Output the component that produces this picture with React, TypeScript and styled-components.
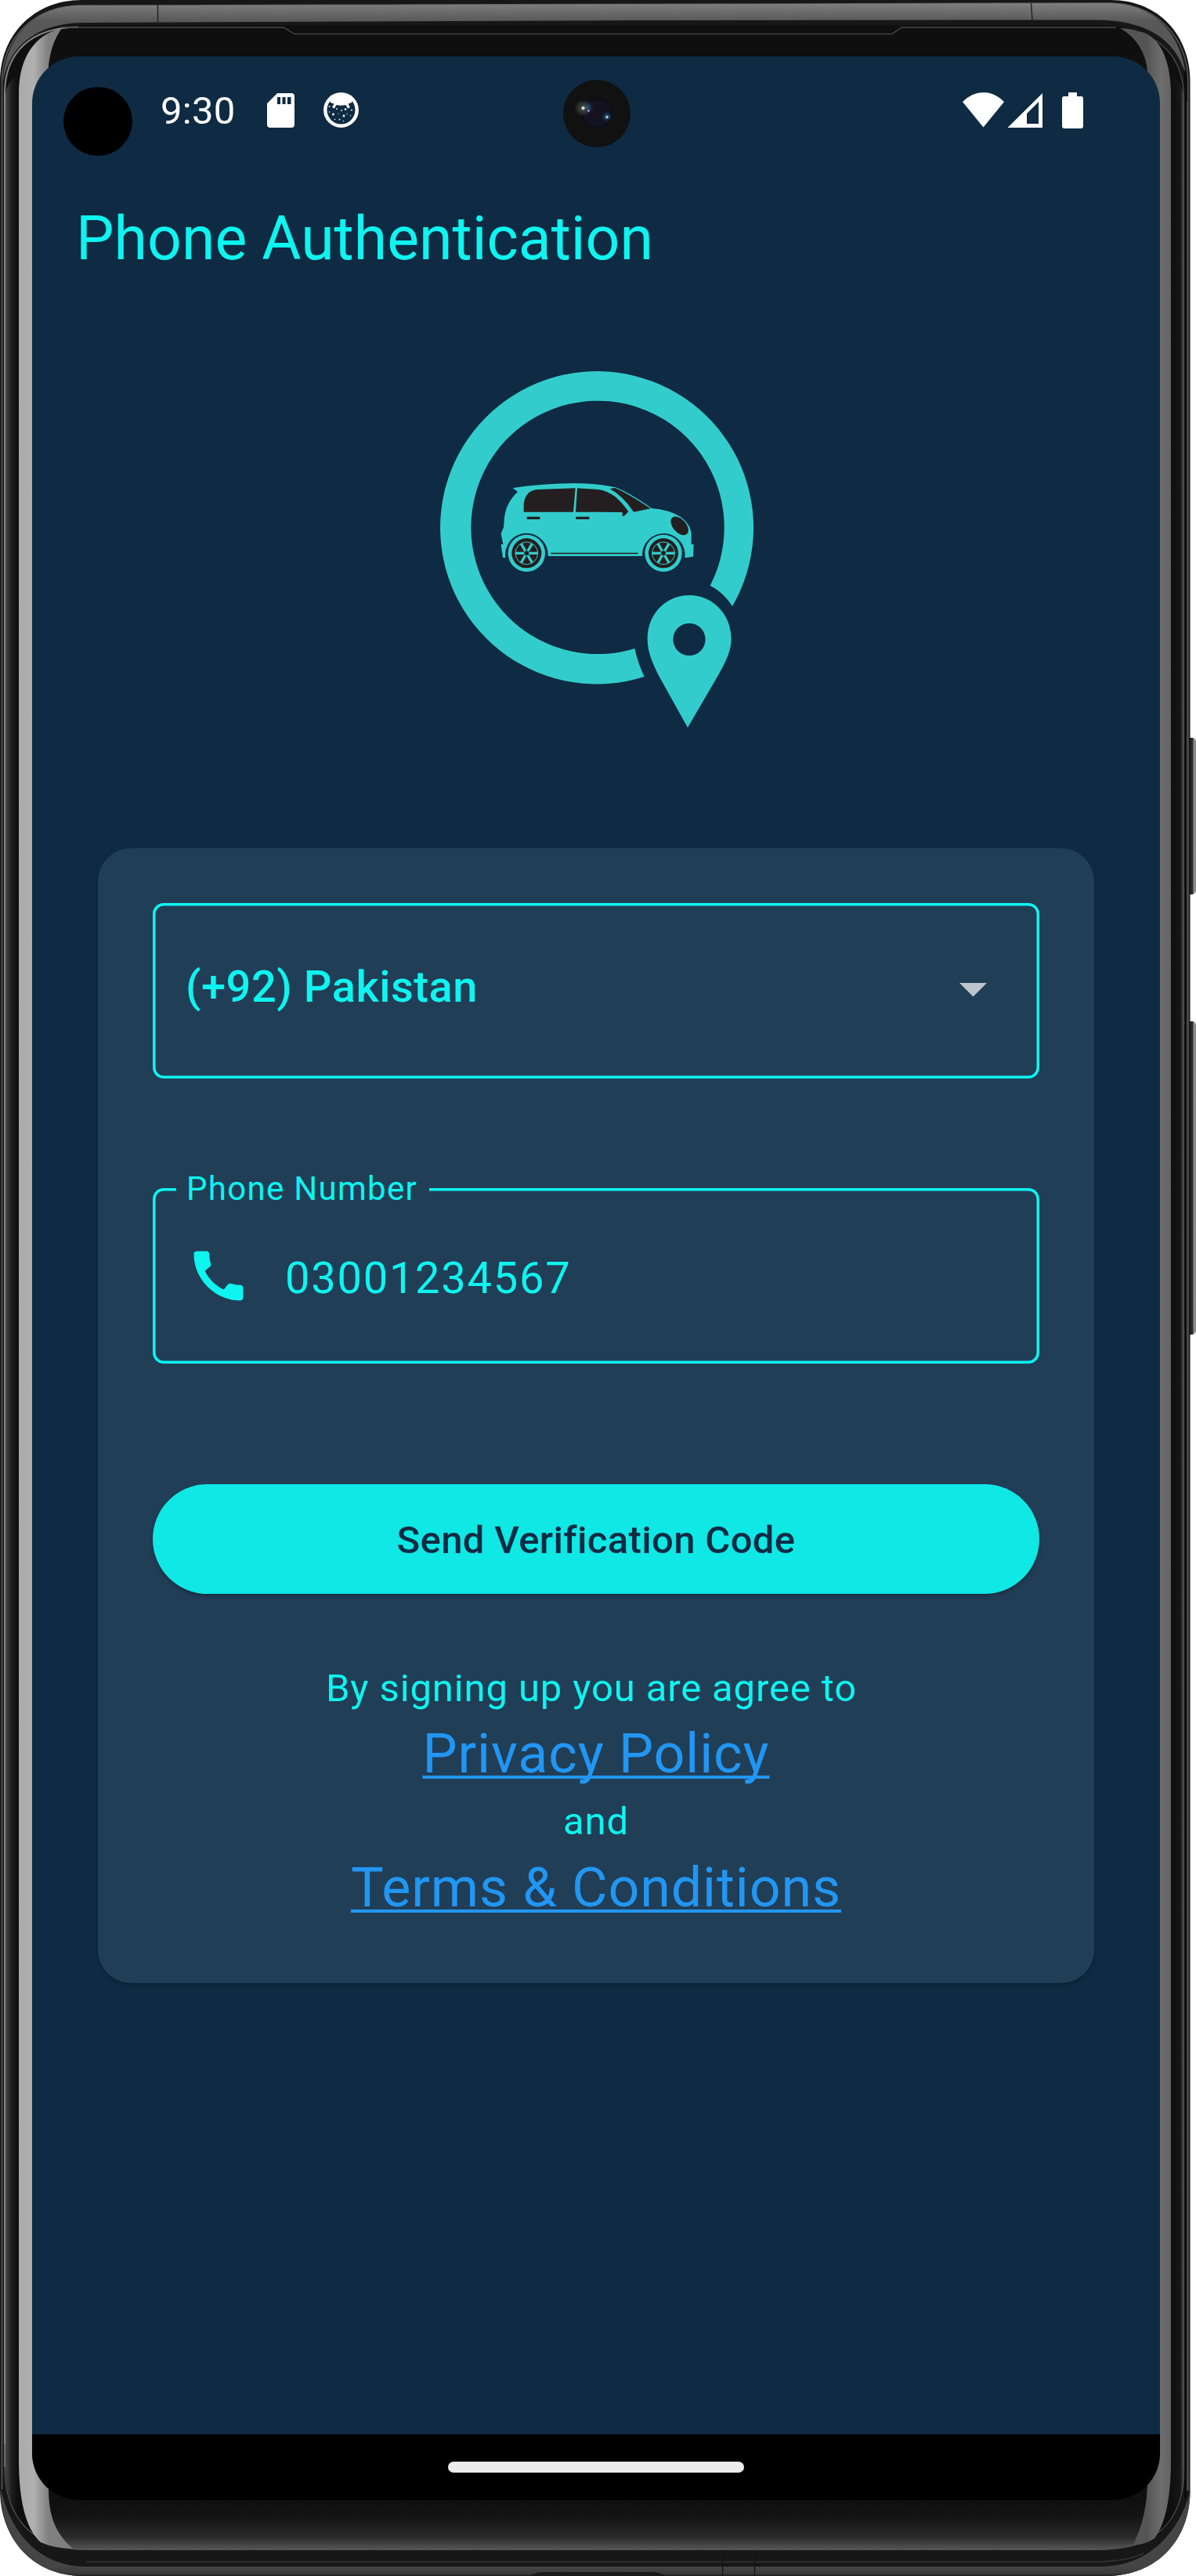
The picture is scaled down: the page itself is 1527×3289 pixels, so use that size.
import { useState } from 'react';
import styled, { createGlobalStyle, css } from 'styled-components';
import { MdCall } from 'react-icons/md';

const colors = {
  background: '#0e2b43',
  card: '#213e57',
  accent: '#0ef4f0',
  button: '#0fe8e5',
  link: '#2196f3',
  logo: '#33cccc',
  dark: '#231f20',
};

export default function App() {
  const [phone, setPhone] = useState('03001234567');

  return (
    <Device>
      <GlobalStyle />
      <DeviceFrame />
      <Screen>
        <StatusBar>
          <Clock>9:30</Clock>
          <SdCardIcon />
          <DebugIcon />
          <StatusSpacer />
          <SignalIcons />
        </StatusBar>
        <AppBar>
          <Title>Phone Authentication</Title>
        </AppBar>
        <Body>
          <Logo />
          <Card>
            <CountrySelect>
              <CountryName>(+92) Pakistan</CountryName>
              <Arrow viewBox="0 0 10 5">
                <path d="M0 0h10L5 5z" fill="#bcc5cd" />
              </Arrow>
            </CountrySelect>
            <PhoneField>
              <FieldLabel>Phone Number</FieldLabel>
              <MdCall />
              <PhoneInput
                value={phone}
                onChange={e => setPhone(e.target.value)}
              />
            </PhoneField>
            <SendButton>Send Verification Code</SendButton>
            <Terms>
              <TermsText height={70} shift={-6}>
                By signing up you are agree to
              </TermsText>
              <TermsLink height={96}>Privacy Policy</TermsLink>
              <TermsText height={78}>and</TermsText>
              <TermsLink height={90}>Terms &amp; Conditions</TermsLink>
            </Terms>
          </Card>
        </Body>
        <NavigationBar>
          <NavigationPill />
        </NavigationBar>
        <Cutout />
        <Camera />
      </Screen>
    </Device>
  );
}

function SdCardIcon() {
  return (
    <SdCard viewBox="0 0 35 44">
      <path
        fill="#fff"
        fillRule="evenodd"
        d="M13 0H31a4 4 0 0 1 4 4V40a4 4 0 0 1-4 4H4a4 4 0 0 1-4-4V13ZM13 5v9h4V5ZM19.500 5v9h4V5ZM26 5v9h4.500V5Z"
      />
    </SdCard>
  );
}

function DebugIcon() {
  return (
    <Debug viewBox="0 0 45 45">
      <circle cx="22.500" cy="22.500" r="20.200" fill="none" stroke="#fff" strokeWidth="4.500" />
      <path
        fill="#fff"
        d="M8 9Q22-3 37 9L36 13 31.500 14.500 34 19 31 20.500 28.500 16Q22.500 17.500 16.500 16L14 20.500 11 19 13.500 14.500 9 13Z"
      />
      <g fill="#fff">
        <circle cx="7.500" cy="18" r=".9" />
        <circle cx="7.500" cy="25" r=".8" />
        <circle cx="12.500" cy="28" r="1.400" />
        <circle cx="17" cy="21" r=".9" />
        <circle cx="23" cy="23" r=".9" />
        <circle cx="28" cy="21.500" r="1.300" />
        <circle cx="36" cy="22.500" r=".9" />
        <circle cx="30" cy="27.500" r=".7" />
        <circle cx="26" cy="30" r="1.400" />
        <circle cx="14.500" cy="34.500" r=".8" />
        <circle cx="20.500" cy="34.500" r=".9" />
        <circle cx="25.500" cy="36.500" r=".7" />
        <circle cx="34.500" cy="29.500" r=".7" />
        <circle cx="19" cy="27" r=".6" />
      </g>
    </Debug>
  );
}

function SignalIcons() {
  return (
    <Signal viewBox="0 0 155 46" fill="#fff">
      <path d="M0 12Q12 0 26.500 0T53 12L26.500 44.500Z" />
      <path
        fillRule="evenodd"
        d="M57.500 45 102 1V45ZM82 27V40H97V12Z"
      />
      <path d="M135 0H146V5H151.500Q154 5 154 8V43Q154 46 151 46H130Q127 46 127 43V8Q127 5 129.500 5H135Z" />
    </Signal>
  );
}

function Wheel({ cx }: { cx: number }) {
  return (
    <g transform={`translate(${cx} 769)`}>
      <circle r="71" fill={colors.logo} />
      <circle r="57" fill={colors.dark} />
      <circle r="43" fill="none" stroke={colors.logo} strokeWidth="3" />
      {[0, 60, 120].map(angle => (
        <path
          key={angle}
          d="M-43 0H43"
          stroke={colors.logo}
          strokeWidth="10"
          transform={`rotate(${angle})`}
        />
      ))}
      <circle r="9" fill={colors.dark} />
    </g>
  );
}

function Logo() {
  return (
    <LogoSvg viewBox="61 72 1200 1368">
      <g fill={colors.logo}>
        <path d="M1183 972A600 599 0 1 0 846 1242Q822 1192 809 1134A485 485 0 1 1 1098 893Q1148 918 1183 972Z" />
        <path
          fillRule="evenodd"
          d="M1012 1437 905 1245C876 1190 858 1145 858 1098 858 1000 930 930 1018 930 1108 930 1179 1003 1179 1098 1179 1140 1160 1182 1128 1238ZM1018 1037a62 62 0 1 0 0 124 62 62 0 1 0 0-124Z"
        />
        <path d="M342 519Q450 502 580 501 680 503 736 517 790 538 874 597 940 602 985 630 1020 655 1026 690V735H1035L1033 782 1001 787A82 82 0 1 0 838 780H477A82 82 0 1 0 314 786H304L297 735H305L297 694 307 670Q309 655 309 640 315 575 361 534Z" />
      </g>
      <g fill={colors.dark}>
        <path d="M384 611V580Q390 530 435 525L582 520 574 611Z" />
        <path d="M589 520 670 525Q702 529 735 553 765 580 785 610L768 627H762V612L583 611Z" />
        <path d="M714 522 734 519Q785 541 870 598L805 611Q765 550 714 522Z" />
        <ellipse cx="981" cy="664" rx="42" ry="25" transform="rotate(48 981 664)" />
        <path d="M396 629h50v10h-50zM584 629h51v10h-51zM488 767h334v5h-334z" />
      </g>
      <Wheel cx={395} />
      <Wheel cx={919} />
    </LogoSvg>
  );
}

function Camera() {
  return (
    <CameraSvg viewBox="0 0 86 86">
      <defs>
        <radialGradient id="lens">
          <stop offset="0" stopColor="#17101c" />
          <stop offset=".7" stopColor="#131322" />
          <stop offset="1" stopColor="#0b0d12" />
        </radialGradient>
        <radialGradient id="glow">
          <stop offset="0" stopColor="#8f9484" stopOpacity=".5" />
          <stop offset="1" stopColor="#8f9484" stopOpacity="0" />
        </radialGradient>
        <radialGradient id="blueGlow">
          <stop offset="0" stopColor="#2f7cc0" />
          <stop offset="1" stopColor="#17406c" stopOpacity="0" />
        </radialGradient>
      </defs>
      <circle cx="43" cy="43" r="43" fill="#101110" />
      <circle cx="43" cy="43" r="20.500" fill="url(#lens)" />
      <circle cx="25" cy="36" r="11" fill="url(#glow)" />
      <circle cx="31" cy="35" r="9" fill="url(#blueGlow)" opacity=".5" />
      <circle cx="56" cy="47" r="7" fill="url(#blueGlow)" opacity=".8" />
      <circle cx="25.500" cy="36" r="2.200" fill="#d3d6c6" />
      <circle cx="32.500" cy="39.500" r="1.300" fill="#c7a3cf" />
      <circle cx="56" cy="47.500" r="1.700" fill="#a5d0ee" />
    </CameraSvg>
  );
}

function DeviceFrame() {
  return (
    <FrameSvg viewBox="0 0 1527 3289">
      <defs>
        <linearGradient id="topRail" x1="0" y1="5" x2="0" y2="27" gradientUnits="userSpaceOnUse">
          <stop offset="0" stopColor="#7d7d7d" />
          <stop offset="1" stopColor="#585858" />
        </linearGradient>
        <linearGradient id="leftGlass" x1="7" y1="0" x2="23" y2="0" gradientUnits="userSpaceOnUse">
          <stop offset="0" stopColor="#4a4a4a" />
          <stop offset=".5" stopColor="#1c1c1c" />
          <stop offset="1" stopColor="#0d0d0d" />
        </linearGradient>
        <linearGradient id="rightGlass" x1="1495" y1="0" x2="1512" y2="0" gradientUnits="userSpaceOnUse">
          <stop offset="0" stopColor="#0f0f0f" />
          <stop offset=".7" stopColor="#161616" />
          <stop offset="1" stopColor="#505050" />
        </linearGradient>
        <linearGradient id="chin" x1="0" y1="3192" x2="0" y2="3256" gradientUnits="userSpaceOnUse">
          <stop offset="0" stopColor="#0f0f0f" />
          <stop offset=".35" stopColor="#141414" />
          <stop offset=".75" stopColor="#2c2c2c" />
          <stop offset="1" stopColor="#575757" />
        </linearGradient>
        <linearGradient id="bottomRail" x1="0" y1="3277" x2="0" y2="3289" gradientUnits="userSpaceOnUse">
          <stop offset="0" stopColor="#454545" />
          <stop offset=".75" stopColor="#3a3a3a" />
          <stop offset="1" stopColor="#1c1a1b" />
        </linearGradient>
        <linearGradient id="leftShine" x1="24" y1="0" x2="62" y2="0" gradientUnits="userSpaceOnUse">
          <stop offset="0" stopColor="#aaaaaa" />
          <stop offset=".5" stopColor="#b0b0b0" />
          <stop offset="1" stopColor="#808080" />
        </linearGradient>
        <linearGradient id="rightShine" x1="1464" y1="0" x2="1495" y2="0" gradientUnits="userSpaceOnUse">
          <stop offset="0" stopColor="#555" />
          <stop offset=".6" stopColor="#6d6d6d" />
          <stop offset="1" stopColor="#636363" />
        </linearGradient>
        <linearGradient id="key" x1="1518" y1="0" x2="1527" y2="0" gradientUnits="userSpaceOnUse">
          <stop offset="0" stopColor="#1b1b1b" />
          <stop offset=".5" stopColor="#2c2c2c" />
          <stop offset=".7" stopColor="#909090" />
          <stop offset="1" stopColor="#858585" />
        </linearGradient>
      </defs>

      {/* side keys */}
      <rect x="1512" y="942" width="15" height="200" rx="5" fill="url(#key)" />
      <rect x="1512" y="1304" width="15" height="400" rx="5" fill="url(#key)" />

      {/* body */}
      <path
        d="M104 0H1418C1480 0 1519.500 46 1519.500 104V3180C1519.500 3242 1478 3289 1412 3289H106C42 3289 0 3242 0 3178V104C0 44 44 0 104 0Z"
        fill="#171717"
      />
      <path
        d="M2.500 3178V104C3 46 46 7 104 7L1415 4C1475 4 1516 46 1517 104V3180"
        fill="none"
        stroke="#5a5a5a"
        strokeWidth="1.500"
      />
      <path
        d="M4 104C6 46 46 7 104 7L600 6 1415 4C1470 4 1508 40 1514 96 1500 48 1462 26 1400 25.500L800 26 104 29C50 30 12 56 4 104Z"
        fill="url(#topRail)"
      />
      <path d="M201.500 6V30M1316.500 4L1318 26" stroke="#222" strokeWidth="1.500" />
      <path
        d="M1 3178C14 3236 52 3277 110 3277H1405C1462 3277 1500 3240 1517 3190L1519.500 3180C1519.500 3242 1478 3289 1412 3289H106C42 3289 1 3242 1 3178Z"
        fill="url(#bottomRail)"
      />
      <path d="M676 3289Q684 3284 696 3284H832Q842 3284 850 3289Z" fill="#1c191b" />
      <path
        d="M110 3271H1400Q1440 3270 1460 3260"
        fill="none"
        stroke="#333"
        strokeWidth="1.500"
      />
      <path d="M922.500 3257V3288M963.500 3257V3288" stroke="#151515" strokeWidth="1.500" />

      {/* glass */}
      <path
        d="M110 32H1400C1470 32 1512 62 1512 130V3150C1512 3220 1476 3255.500 1400 3255.500H110C40 3255.500 6 3212 6 3150V120C6 62 44 32 110 32Z"
        fill="#0f0f0f"
      />
      <path
        d="M24 95C14 100 7 110 7 125V3150C7 3200 30 3238 60 3248L30 3210Q24 3180 24 3150Z"
        fill="url(#leftGlass)"
      />
      <path
        d="M1494 95Q1512 105 1512 130V3150C1512 3200 1495 3226 1474 3240L1488 3200Q1494 3180 1494 3150Z"
        fill="url(#rightGlass)"
      />
      <path
        d="M60 3192H1468L1450 3250Q1430 3255.500 1400 3255.500H110Q96 3255.500 90 3254Q64 3230 62 3192Z"
        fill="url(#chin)"
      />
      <path d="M6 3150V120C6 66 40 35 100 34.500" fill="none" stroke="#868686" strokeWidth="2" />
      <path
        d="M6 3120V3150C6 3212 40 3255.500 110 3255.500H1400C1476 3255.500 1512 3220 1512 3150V130C1512 80 1490 48 1440 39"
        fill="none"
        stroke="#555"
        strokeWidth="1.200"
      />
      <path d="M1510 130V3150M1515.700 130V3180" stroke="#4a4a4a" strokeWidth="1.200" />
      <path d="M1513.300 90V3190" stroke="#060606" strokeWidth="2" />
      <path
        d="M80 35H362L376 43.300H1139L1151 35H1425"
        fill="none"
        stroke="#484848"
        strokeWidth="1.300"
      />

      {/* reflections along the curved edges */}
      <path
        d="M79 36C44 44 24 74 24 120V3140C24 3190 32 3228 52 3246Q70 3254 93 3254C70 3234 62 3212 62 3176V84Q65 55 79 36Z"
        fill="url(#leftShine)"
      />
      <path
        d="M1430 36Q1462 54 1465 92V3165Q1465 3215 1446 3250 1462 3249 1474 3241C1488 3222 1495 3190 1495 3140V120C1495 72 1478 44 1454 40Q1442 36 1430 36Z"
        fill="url(#rightShine)"
      />
    </FrameSvg>
  );
}

const GlobalStyle = createGlobalStyle`
  * {
    box-sizing: border-box;
  }
  body {
    margin: 0;
    background: #fff;
    font-family: Roboto, sans-serif;
  }
`;

const Device = styled.div`
  position: relative;
  width: 1527px;
  height: 3289px;
  padding: 72px 46px 97px 41px;
  overflow: hidden;
`;

const FrameSvg = styled.svg`
  position: absolute;
  top: 0;
  left: 0;
  width: 1527px;
  height: 3289px;
`;

const Screen = styled.main`
  position: relative;
  display: flex;
  flex-direction: column;
  width: 1440px;
  height: 3120px;
  border-radius: 60px;
  overflow: hidden;
  background: ${colors.background};
`;

const StatusBar = styled.div`
  display: flex;
  align-items: center;
  height: 137px;
  padding: 0 97px 0 164px;
`;

const Clock = styled.span`
  width: 136px;
  padding-top: 3px;
  font-size: 49px;
  line-height: 58px;
  letter-spacing: 0.3px;
  color: #fff;
`;

const SdCard = styled.svg`
  width: 35px;
  height: 44px;
  margin-right: 37px;
`;

const Debug = styled.svg`
  width: 45px;
  height: 45px;
`;

const StatusSpacer = styled.div`
  flex: 1;
`;

const Signal = styled.svg`
  width: 155px;
  height: 46px;
`;

const Cutout = styled.div`
  position: absolute;
  top: 39px;
  left: 40px;
  width: 88px;
  height: 88px;
  border-radius: 50%;
  background: #000;
`;

const CameraSvg = styled.svg`
  position: absolute;
  top: 30px;
  left: 678px;
  width: 86px;
  height: 86px;
`;

const AppBar = styled.header`
  display: flex;
  align-items: center;
  height: 192px;
  padding: 0 56px;
`;

const Title = styled.h1`
  margin: 0;
  font-size: 77px;
  font-weight: 400;
  line-height: 90px;
  color: ${colors.accent};
`;

const Body = styled.div`
  display: flex;
  flex: 1;
  flex-direction: column;
  align-items: center;
  padding: 73px 84px 0;
`;

const LogoSvg = styled.svg`
  flex: none;
  width: 400px;
  height: 456px;
  margin-bottom: 153px;
  overflow: visible;
`;

const Card = styled.section`
  display: flex;
  flex-direction: column;
  width: 100%;
  height: 1449px;
  padding: 70px;
  border-radius: 42px;
  background: ${colors.card};
  box-shadow: 0 3px 5px rgba(0, 0, 0, 0.22);
`;

const outlined = css`
  display: flex;
  align-items: center;
  height: 224px;
  border-radius: 14px;
  box-shadow: inset 0 0 0 3.5px ${colors.accent};
  color: ${colors.accent};
`;

const CountrySelect = styled.div`
  ${outlined}
  justify-content: space-between;
  padding: 0 67px 2px 42px;
  margin-bottom: 140px;
`;

const CountryName = styled.span`
  padding-bottom: 9px;
  font-size: 56px;
  font-weight: 500;
  letter-spacing: 0.525px;
`;

const Arrow = styled.svg`
  width: 35px;
  height: 17.5px;
`;

const PhoneField = styled.label`
  ${outlined}
  position: relative;
  gap: 43px;
  padding: 0 42px;
  margin-bottom: 154px;
  svg {
    flex: none;
    width: 84px;
    height: 84px;
  }
`;

const FieldLabel = styled.span`
  position: absolute;
  top: -23px;
  left: 30px;
  padding: 0 15px 0 13px;
  font-size: 42px;
  line-height: 48px;
  letter-spacing: 1.3px;
  background: ${colors.card};
`;

const PhoneInput = styled.input`
  flex: 1;
  min-width: 0;
  padding: 6px 0 0;
  border: none;
  outline: none;
  background: transparent;
  font-family: inherit;
  font-size: 56px;
  letter-spacing: 1.75px;
  color: inherit;
`;

const SendButton = styled.button`
  flex: none;
  height: 140px;
  margin-bottom: 86px;
  padding: 2px 0 0;
  border: none;
  border-radius: 70px;
  background: ${colors.button};
  box-shadow: 0 3px 5px rgba(0, 0, 0, 0.25);
  font-family: inherit;
  font-size: 49px;
  font-weight: 500;
  letter-spacing: 0.35px;
  color: ${colors.background};
`;

const Terms = styled.div`
  display: flex;
  flex-direction: column;
  align-items: center;
`;

const TermsText = styled.span<{ height: number; shift?: number }>`
  height: ${({ height }) => height}px;
  line-height: ${({ height }) => height}px;
  margin-left: ${({ shift = 0 }) => shift * 2}px;
  font-size: 49px;
  letter-spacing: 0.875px;
  color: ${colors.accent};
`;

const TermsLink = styled.a<{ height: number }>`
  height: ${({ height }) => height}px;
  line-height: ${({ height }) => height}px;
  font-size: 70px;
  letter-spacing: 0.875px;
  color: ${colors.link};
  cursor: pointer;
  text-decoration: underline;
  text-decoration-thickness: 3.5px;
  text-decoration-skip-ink: none;
  text-underline-offset: 4px;
`;

const NavigationBar = styled.div`
  display: flex;
  align-items: center;
  justify-content: center;
  height: 84px;
  background: #000;
`;

const NavigationPill = styled.div`
  width: 378px;
  height: 14px;
  border-radius: 7px;
  background: #ebebeb;
`;
